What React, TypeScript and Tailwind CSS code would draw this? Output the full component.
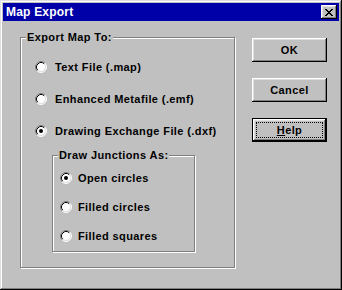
import React from 'react';

const raised =
  'shadow-[inset_-1px_-1px_0_#000,inset_1px_1px_0_#fff,inset_-2px_-2px_0_#808080,inset_2px_2px_0_#dfdfdf]';
const etched = 'border border-[#808080] shadow-[inset_1px_1px_0_#fff,1px_1px_0_#fff]';

function Radio({ checked }: { checked?: boolean }) {
  return (
    <svg width="12" height="12" viewBox="0 0 12 12" className="shrink-0">
      <circle cx="6" cy="6" r="5" fill="#fff" />
      <path d="M 2.11 9.89 A 5.5 5.5 0 0 1 9.89 2.11" fill="none" stroke="#808080" />
      <path d="M 9.89 2.11 A 5.5 5.5 0 0 1 2.11 9.89" fill="none" stroke="#fff" />
      <path d="M 2.82 9.18 A 4.5 4.5 0 0 1 9.18 2.82" fill="none" stroke="#000" />
      <path d="M 9.18 2.82 A 4.5 4.5 0 0 1 2.82 9.18" fill="none" stroke="#dfdfdf" />
      {checked && <circle cx="6" cy="6" r="2" fill="#000" />}
    </svg>
  );
}

function CloseGlyph() {
  const rows = ['11000011', '01100110', '00111100', '00011000', '00111100', '01100110', '11000011'];
  return (
    <svg width="8" height="7" viewBox="0 0 8 7" shapeRendering="crispEdges">
      {rows.map((r, y) =>
        r.split('').map((c, x) => (c === '1' ? <rect key={`${x}-${y}`} x={x} y={y} width="1" height="1" fill="#000" /> : null))
      )}
    </svg>
  );
}

function Option({ label, checked, gap }: { label: string; checked?: boolean; gap: string }) {
  return (
    <div className={`flex items-center h-[12px] ${gap}`}>
      <Radio checked={checked} />
      <span className="leading-[12px] whitespace-nowrap">{label}</span>
    </div>
  );
}

export default function App() {
  return (
    <div className="w-[342px] h-[290px] bg-[#c0c0c0] p-[3px] flex flex-col text-[11px] font-bold tracking-[0.4px] text-black font-['Liberation_Sans',Arial,sans-serif] shadow-[inset_-1px_-1px_0_#000,inset_1px_1px_0_#dfdfdf,inset_-2px_-2px_0_#808080,inset_2px_2px_0_#fff]">
      <div className="h-[18px] bg-[#0000a8] flex items-center justify-between pl-[3px] pr-[2px]">
        <span className="text-white text-[12px] tracking-[0.2px]">Map Export</span>
        <button className={`w-[16px] h-[14px] bg-[#c0c0c0] flex items-center justify-center ${raised}`}>
          <CloseGlyph />
        </button>
      </div>

      <div className="flex items-start pl-[17px] pt-[16px]">
        <div className={`relative w-[215px] h-[231px] ${etched}`}>
          <span className="absolute left-[5px] top-[-8px] px-[1px] bg-[#c0c0c0] leading-[14px]">Export Map To:</span>
          <div className="flex flex-col pl-[14px] pt-[23px] gap-[20px]">
            <Option label="Text File (.map)" gap="gap-[8px]" />
            <Option label="Enhanced Metafile (.emf)" gap="gap-[8px]" />
            <Option label="Drawing Exchange File (.dxf)" checked gap="gap-[8px]" />
          </div>
          <div className={`relative ml-[31px] mt-[18px] w-[143px] h-[97px] ${etched}`}>
            <span className="absolute left-[5px] top-[-8px] px-[1px] bg-[#c0c0c0] leading-[14px]">Draw Junctions As:</span>
            <div className="flex flex-col pl-[7px] pt-[16px] gap-[17px]">
              <Option label="Open circles" checked gap="gap-[6px]" />
              <Option label="Filled circles" gap="gap-[6px]" />
              <Option label="Filled squares" gap="gap-[6px]" />
            </div>
          </div>
        </div>

        <div className="flex flex-col gap-[16px] ml-[17px] mt-[1px]">
          <button className={`w-[75px] h-[24px] bg-[#c0c0c0] ${raised}`}>OK</button>
          <button className={`w-[75px] h-[24px] bg-[#c0c0c0] ${raised}`}>Cancel</button>
          <button className={`w-[75px] h-[24px] bg-[#c0c0c0] border border-black flex ${raised}`}>
            <span className="flex-1 m-[3px] border border-dotted border-black flex items-center justify-center">
              <span>
                <u className="underline-offset-[1px]">H</u>elp
              </span>
            </span>
          </button>
        </div>
      </div>
    </div>
  );
}
